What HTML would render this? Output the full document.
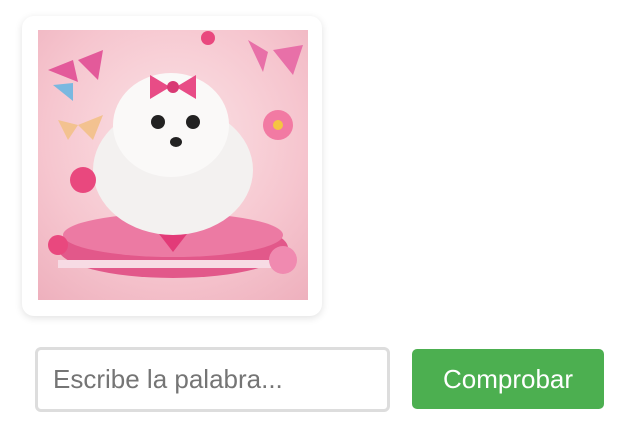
<!DOCTYPE html>
<html><head><style>
body{margin:0;width:622px;height:446px;background:#fff;font-family:"Liberation Sans",Arial,sans-serif;position:relative;overflow:hidden}
.card{position:absolute;left:22px;top:16px;width:300px;height:300px;background:#fff;border-radius:12px;box-shadow:0 2px 8px rgba(0,0,0,.12)}
.img{position:absolute;left:38px;top:30px;width:270px;height:270px;overflow:hidden;background:radial-gradient(circle at 50% 40%,#fbe3e6 0%,#f6c6cf 60%,#eeb0bd 100%)}
.inp{position:absolute;left:35px;top:347px;box-sizing:border-box;width:355px;height:65px;border:3px solid #ddd;border-radius:6px;font-size:26px;color:#757575;padding-left:15px;line-height:59px}
.btn{position:absolute;left:412px;top:349px;width:192px;height:60px;background:#4caf50;border-radius:5px;color:#fff;font-size:26px;text-align:center;line-height:60px}
</style></head><body>
<div class="card"></div>
<div class="img">
<svg width="270" height="270" viewBox="0 0 270 270">
<ellipse cx="135" cy="218" rx="115" ry="30" fill="#e2588a"/>
<ellipse cx="135" cy="205" rx="110" ry="22" fill="#ec7aa3"/>
<rect x="20" y="230" width="230" height="8" fill="#f7dbe4"/>
<path d="M118 200 q17 -20 34 0 l-17 22z" fill="#e23b78"/>
<ellipse cx="135" cy="140" rx="80" ry="65" fill="#f3f1f0"/>
<ellipse cx="133" cy="95" rx="58" ry="52" fill="#faf9f8"/>
<ellipse cx="120" cy="92" rx="7" ry="7" fill="#222"/>
<ellipse cx="155" cy="92" rx="7" ry="7" fill="#222"/>
<ellipse cx="138" cy="112" rx="6" ry="5" fill="#222"/>
<path d="M112 45 l20 12 l-20 12z M158 45 l-20 12 l20 12z" fill="#e84c86"/>
<circle cx="135" cy="57" r="6" fill="#d83a74"/>
<path d="M10 40 l25 -10 l5 22z M40 30 l25 -10 l-5 30z" fill="#e35a9a"/>
<path d="M15 55 l20 -2 l0 18z" fill="#7ab8e0"/>
<path d="M210 10 l20 12 l-5 20z M235 20 l30 -5 l-10 30z" fill="#e870a8"/>
<path d="M20 90 l20 5 l-10 15z M40 95 l25 -10 l-10 25z" fill="#f3c290"/>
<circle cx="240" cy="95" r="15" fill="#f27aa3"/>
<circle cx="240" cy="95" r="5" fill="#f5c542"/>
<circle cx="45" cy="150" r="13" fill="#e9487e"/>
<circle cx="245" cy="230" r="14" fill="#f08ab0"/>
<circle cx="20" cy="215" r="10" fill="#e9487e"/>
<circle cx="170" cy="8" r="7" fill="#e9487e"/>
</svg>
</div>
<div class="inp">Escribe la palabra...</div>
<div class="btn">Comprobar</div>
</body></html>
